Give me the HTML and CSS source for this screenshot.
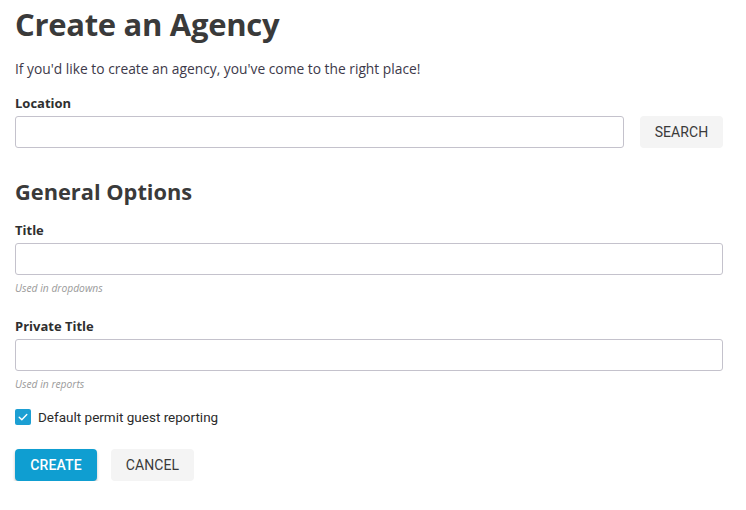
FILE: index.html
```html
<!DOCTYPE html>
<html lang="en">
<head>
<meta charset="utf-8">
<title>Create an Agency</title>
<link rel="stylesheet" href="styles.css">
</head>
<body>
<main class="page">
  <h1 class="page-title">Create an Agency</h1>
  <p class="intro">If you'd like to create an agency, you've come to the right place!</p>

  <div class="field">
    <label class="field-label" for="location">Location</label>
    <div class="search-row">
      <input class="text-input" id="location" type="text">
      <button class="btn btn-flat" type="button">SEARCH</button>
    </div>
  </div>

  <h2 class="section-title">General Options</h2>

  <div class="field">
    <label class="field-label" for="title">Title</label>
    <input class="text-input" id="title" type="text">
    <div class="helper">Used in dropdowns</div>
  </div>

  <div class="field field-private">
    <label class="field-label" for="private">Private Title</label>
    <input class="text-input" id="private" type="text">
    <div class="helper">Used in reports</div>
  </div>

  <label class="check-row">
    <span class="checkbox">
      <svg viewBox="0 0 16 16" width="16" height="16"><path d="M4.2 8.3 L6.8 10.8 L11.8 5.6" fill="none" stroke="#fff" stroke-width="1.4" stroke-linecap="round" stroke-linejoin="round"/></svg>
    </span>
    <span class="check-text">Default permit guest reporting</span>
  </label>

  <div class="actions">
    <button class="btn btn-primary" type="button">CREATE</button>
    <button class="btn btn-flat" type="button">CANCEL</button>
  </div>
</main>
</body>
</html>
```

FILE: styles.css
```css
* { box-sizing: border-box; }
body {
  margin: 0;
  background: #fff;
  font-family: "Open Sans", "Noto Sans", sans-serif;
  color: #333;
}
.page {
  padding: 4px 23px 0 15px;
}
.page-title {
  margin: 0;
  font-size: 31px;
  font-weight: 700;
  line-height: 40px;
  color: #3a3a3a;
  letter-spacing: -0.3px;
}
.intro {
  margin: 16px 0 0;
  font-size: 13.8px;
  line-height: 18px;
  color: #3d3a4a;
}
.field { margin-top: 16px; }
.field-label {
  display: block;
  font-size: 13px;
  font-weight: 700;
  line-height: 18px;
  color: #2f2f2f;
  margin-bottom: 4px;
}
.search-row {
  display: flex;
  gap: 16px;
  align-items: flex-start;
}
.text-input {
  display: block;
  width: 100%;
  height: 32px;
  border: 1px solid #c4c2cc;
  border-radius: 3px;
  background: #fff;
  padding: 0 8px;
  font: inherit;
  outline: none;
}
.search-row .text-input { flex: 1; }
.btn {
  height: 32px;
  border: 0;
  border-radius: 4px;
  padding: 0 14px;
  font-family: Roboto, "Liberation Sans", sans-serif;
  font-size: 14px;
  letter-spacing: 0.1px;
  cursor: pointer;
}
.btn-flat {
  background: #f4f4f4;
  color: #3a3a3a;
  min-width: 83px;
}
.btn-primary {
  background: #0f9ed1;
  color: #fff;
  font-weight: 500;
  min-width: 82px;
  box-shadow: 0 2px 3px rgba(0,0,0,0.25);
}
.section-title {
  margin: 29px 0 0;
  font-size: 21.8px;
  font-weight: 700;
  line-height: 30px;
  color: #3a3a3a;
}
.section-title + .field { margin-top: 14px; }
.helper {
  margin-top: 6px;
  font-size: 10.3px;
  font-style: italic;
  color: #9a9a9a;
  line-height: 14px;
}
.field-private { margin-top: 22px; }
.check-row {
  display: flex;
  align-items: center;
  gap: 7px;
  margin-top: 18px;
  font-family: Roboto, "Liberation Sans", sans-serif;
  font-size: 13.5px;
  color: #2b2b2b;
}
.checkbox {
  width: 16px;
  height: 16px;
  border-radius: 2px;
  background: #1c9fd3;
  display: flex;
}
.actions {
  display: flex;
  gap: 14px;
  margin-top: 24px;
}
```
